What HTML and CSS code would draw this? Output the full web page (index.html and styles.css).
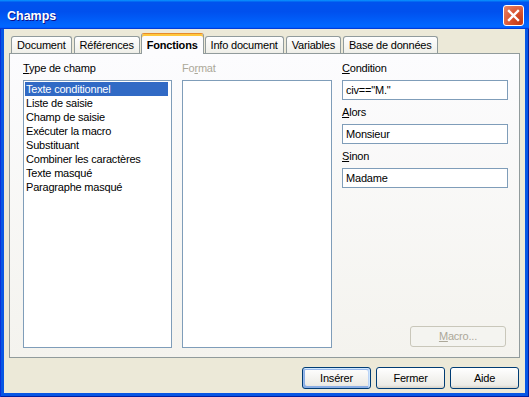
FILE: index.html
```html
<!DOCTYPE html>
<html>
<head>
    <title>Champs</title>
    <link rel="stylesheet" href="styles.css">
</head>
<body>
    <div class="window">
        <div class="titlebar">
            <span class="title">Champs</span>
            <span class="close-button">
                <svg width="19" height="19" viewBox="0 0 19 19">
                    <path d="M5 5 L14 14 M14 5 L5 14" stroke="#fff" stroke-width="2.4" stroke-linecap="square"/>
                </svg>
            </span>
        </div>

        <div class="client">
            <div class="tabs">
                <div class="tab">Document</div>
                <div class="tab">Références</div>
                <div class="tab active">Fonctions</div>
                <div class="tab">Info document</div>
                <div class="tab">Variables</div>
                <div class="tab">Base de données</div>
            </div>

            <div class="page">
                <div class="col col-type">
                    <div class="label"><u>T</u>ype de champ</div>
                    <div class="listbox">
                        <div class="item selected">Texte conditionnel</div>
                        <div class="item">Liste de saisie</div>
                        <div class="item">Champ de saisie</div>
                        <div class="item">Exécuter la macro</div>
                        <div class="item">Substituant</div>
                        <div class="item">Combiner les caractères</div>
                        <div class="item">Texte masqué</div>
                        <div class="item">Paragraphe masqué</div>
                    </div>
                </div>

                <div class="col col-format">
                    <div class="label disabled">Fo<u>r</u>mat</div>
                    <div class="listbox"></div>
                </div>

                <div class="col col-fields">
                    <div class="label"><u>C</u>ondition</div>
                    <div class="input">civ=="M."</div>
                    <div class="label spaced"><u>A</u>lors</div>
                    <div class="input">Monsieur</div>
                    <div class="label spaced"><u>S</u>inon</div>
                    <div class="input">Madame</div>
                    <div class="button macro-button"><u>M</u>acro...</div>
                </div>
            </div>

            <div class="button-row">
                <div class="button default">Insérer</div>
                <div class="button">Fermer</div>
                <div class="button">Aide</div>
            </div>
        </div>
    </div>
</body>
</html>
```

FILE: styles.css
```css
* {
    box-sizing: border-box;
}

body {
    margin: 0;
    padding: 0;
    font-family: "Liberation Sans", Arial, sans-serif;
    font-size: 11px;
    letter-spacing: -0.2px;
    color: #000;
    background-color: #0756e4;
}

.window {
    width: 529px;
    height: 397px;
    display: flex;
    flex-direction: column;
    background-color: #0756e4;
    box-shadow: inset 1px 0 #0831d9, inset -1px -1px #001ea0;
}

.titlebar {
    height: 29px;
    display: flex;
    align-items: center;
    justify-content: space-between;
    padding: 2px 5px 0 7px;
    background: linear-gradient(180deg, #0997ff, #0053ee 8%, #0050ee 40%, #0066ff 88%, #0066ff 93%, #005bff 95%, #003dd7 96%, #003dd7);
}

.title {
    color: #fff;
    font-size: 12.5px;
    font-weight: bold;
    letter-spacing: 0;
    text-shadow: 1px 1px #0f1089;
}

.close-button {
    width: 21px;
    height: 21px;
    display: flex;
    align-items: center;
    justify-content: center;
    border: 1px solid #fff;
    border-radius: 3px;
    background: radial-gradient(circle at 85% 85%, #c43a16 0, #d9532f 45%, #e9876b 100%);
}

.client {
    flex: 1;
    display: flex;
    flex-direction: column;
    margin: 0 4px 4px 4px;
    padding: 4px 5px 4px 5px;
    background-color: #ece9d8;
}

.tabs {
    height: 20px;
    display: flex;
    align-items: flex-end;
    gap: 2px;
    padding-left: 2px;
    position: relative;
    z-index: 1;
}

.tab {
    height: 17px;
    padding: 0 5px;
    line-height: 16px;
    white-space: nowrap;
    border: 1px solid #919b9c;
    border-bottom: none;
    border-radius: 3px 3px 0 0;
    background: linear-gradient(180deg, #fff, #fafaf9 26%, #f0f0ea 95%, #ecebe5);
}

.tab.active {
    height: 21px;
    margin: 0 -1px -1px;
    padding: 2px 5px 0;
    line-height: 18px;
    font-weight: bold;
    border-top-color: #e68b2c;
    box-shadow: inset 0 2px #ffc73c;
    background: #fcfcfe;
}

.page {
    flex: 1;
    display: flex;
    gap: 10px;
    padding: 8px 11px 9px 13px;
    border: 1px solid #919b9c;
    background: linear-gradient(180deg, #fcfcfe, #f4f3ee);
}

.col {
    display: flex;
    flex-direction: column;
}

.col-type {
    width: 149px;
}

.col-format {
    width: 150px;
}

.col-fields {
    width: 166px;
}

.label {
    line-height: 13px;
    margin-bottom: 5px;
    white-space: nowrap;
}

.label.disabled {
    color: #aca899;
}

.label.spaced {
    margin-top: 6px;
}

.listbox {
    flex: 1;
    padding: 1px;
    border: 1px solid #7f9db9;
    background-color: #fff;
}

.item {
    line-height: 14px;
    padding: 0 1px;
    margin-right: 2px;
    white-space: nowrap;
}

.item.selected {
    background-color: #316ac5;
    color: #fff;
}

.input {
    height: 20px;
    padding: 0 3px;
    line-height: 18px;
    border: 1px solid #7f9db9;
    background-color: #fff;
}

.button {
    width: 69px;
    height: 22px;
    line-height: 20px;
    text-align: center;
    border: 1px solid #003c74;
    border-radius: 3px;
    background: linear-gradient(180deg, #fff, #ecebe6 86%, #d6d0c5);
}

.button.default {
    box-shadow: inset -1px 1px #cee7ff, inset 1px 2px #98b8ea, inset -2px 2px #bcd4f6, inset 1px -1px #89ade4, inset 2px -2px #89ade4;
}

.macro-button {
    width: 96px;
    height: 21px;
    line-height: 19px;
    margin-top: auto;
    margin-right: 2px;
    margin-bottom: 1px;
    align-self: flex-end;
    color: #aca899;
    border-color: #c9c7ba;
    background: #f4f4f0;
}

.button-row {
    display: flex;
    justify-content: flex-end;
    gap: 5px;
    margin-top: 9px;
    padding-right: 1px;
}
```
